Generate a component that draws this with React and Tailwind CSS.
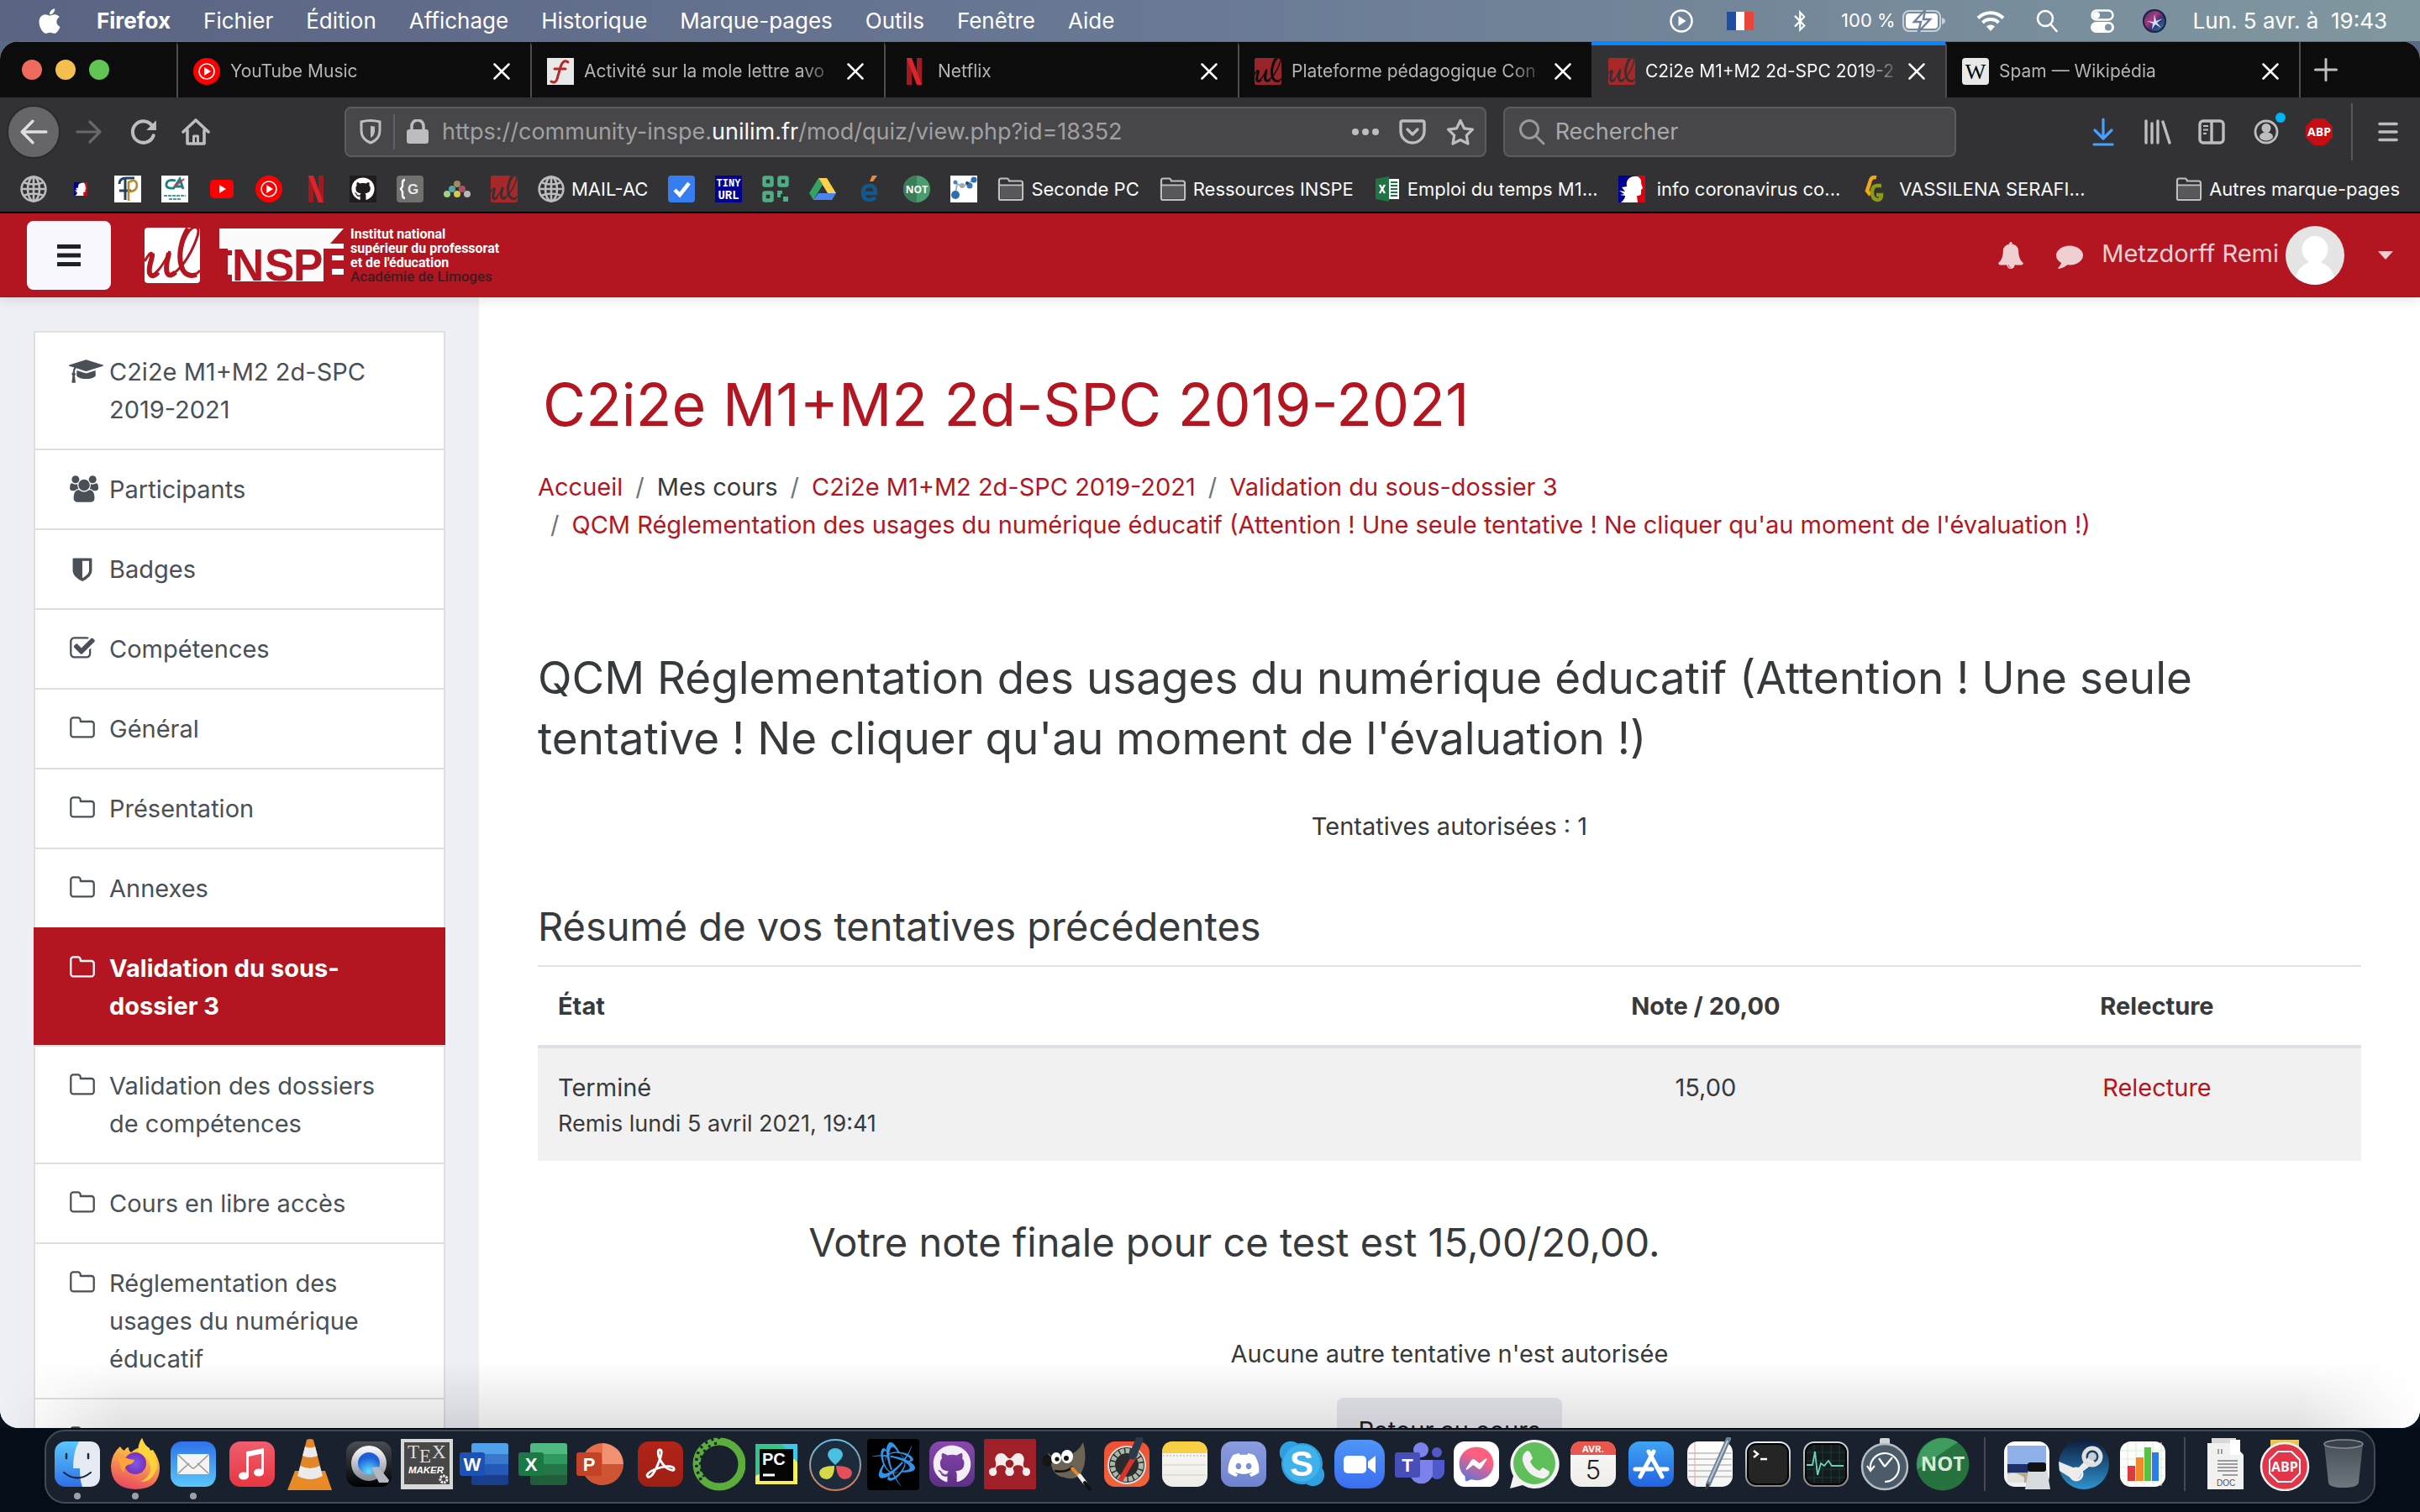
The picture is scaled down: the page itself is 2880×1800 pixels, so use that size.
import React from "react";
import {
  FaApple, FaGithub, FaDiscord, FaWhatsapp, FaFacebookMessenger, FaBattleNet,
  FaBluetoothB, FaMendeley, FaSkype,
} from "react-icons/fa";

const SANS = "font-['Inter','Liberation_Sans',sans-serif]";

/* ---------- shared glyphs ---------- */

function Fa4({ d, w = 1792, width, className = "" }) {
  return (
    <svg viewBox={`0 0 ${w} 1792`} width={width} height={32} fill="currentColor" className={className} aria-hidden="true">
      <path d={d} />
    </svg>
  );
}

const CAP = "M1774 836l18 316q4 69-82 128t-235 93.5-323 34.5-323-34.5-235-93.5-82-128l18-316 574 181q22 7 48 7t48-7zm530-324q0 23-22 31l-1120 352q-4 1-10 1t-10-1l-652-206q-43 34-71 111.5t-34 178.5q63 36 63 109 0 69-58 107l58 433q2 14-8 25-9 11-24 11h-192q-15 0-24-11-10-11-8-25l58-433q-58-38-58-107 0-73 65-111 11-207 98-330l-333-104q-22-8-22-31t22-31l1120-352q4-1 10-1t10 1l1120 352q22 8 22 31z";
const USERS = "M657 896q-162 5-265 128h-134q-82 0-138-40.5t-56-118.5q0-353 124-353 6 0 43.5 21t97.5 42.5 119 21.5q67 0 133-23-5 37-5 66 0 139 81 256zm1071 637q0 120-73 189.5t-194 69.5h-874q-121 0-194-69.5t-73-189.5q0-53 3.5-103.5t14-109 26.5-108.5 43-97.5 62-81 85.5-53.5 111.5-20q10 0 43 21.5t73 48 107 48 135 21.5 135-21.5 107-48 73-48 43-21.5q61 0 111.5 20t85.5 53.5 62 81 43 97.5 26.5 108.5 14 109 3.5 103.5zm-1024-1277q0 106-75 181t-181 75-181-75-75-181 75-181 181-75 181 75 75 181zm704 384q0 159-112.5 271.5t-271.5 112.5-271.5-112.5-112.5-271.5 112.5-271.5 271.5-112.5 271.5 112.5 112.5 271.5zm576 225q0 78-56 118.5t-138 40.5h-134q-103-123-265-128 81-117 81-256 0-29-5-66 66 23 133 23 59 0 119-21.5t97.5-42.5 43.5-21q124 0 124 353zm-128-609q0 106-75 181t-181 75-181-75-75-181 75-181 181-75 181 75 75 181z";
const SHIELD = "M1344 1024v-640h-448v1137q119-63 213-137 235-184 235-360zm192-768v768q0 86-33.5 170.5t-83 150-118 127.5-126.5 103-121 77.5-89.5 49.5-42.5 20q-12 6-26 6t-26-6q-16-7-42.5-20t-89.5-49.5-121-77.5-126.5-103-118-127.5-83-150-33.5-170.5v-768q0-26 19-45t45-19h1152q26 0 45 19t19 45z";
const CHECK = "M1472 930v318q0 119-84.5 203.5t-203.5 84.5h-832q-119 0-203.5-84.5t-84.5-203.5v-832q0-119 84.5-203.5t203.5-84.5h832q63 0 117 25 15 7 18 23 3 17-9 29l-49 49q-10 10-23 10-3 0-9-2-23-6-45-6h-832q-66 0-113 47t-47 113v832q0 66 47 113t113 47h832q66 0 113-47t47-113v-254q0-13 9-22l64-64q10-10 23-10 6 0 12 3 20 8 20 29zm231-489l-814 814q-24 24-57 24t-57-24l-430-430q-24-24-24-57t24-57l110-110q24-24 57-24t57 24l263 263 647-647q24-24 57-24t57 24l110 110q24 24 24 57t-24 57z";
const FOLDER = "M1600 1312v-704q0-40-28-68t-68-28h-704q-40 0-68-28t-28-68v-64q0-40-28-68t-68-28h-320q-40 0-68 28t-28 68v960q0 40 28 68t68 28h1216q40 0 68-28t28-68zm128-704v704q0 92-66 158t-158 66h-1216q-92 0-158-66t-66-158v-960q0-92 66-158t158-66h320q92 0 158 66t66 158v32h672q92 0 158 66t66 158z";
const BELL = "M912 1696q0-16-16-16-59 0-101.5-42.5t-42.5-101.5q0-16-16-16t-16 16q0 73 51.5 124.5t124.5 51.5q16 0 16-16zm816-288q0 52-38 90t-90 38h-448q0 106-75 181t-181 75-181-75-75-181h-448q-52 0-90-38t-38-90q50-42 91-88t85-119.5 74.5-158.5 50-206 19.5-260q0-152 117-282.5t307-158.5q-8-19-8-39 0-40 28-68t68-28 68 28 28 68q0 20-8 39 190 28 307 158.5t117 282.5q0 139 19.5 260t50 206 74.5 158.5 85 119.5 91 88z";
const COMMENT = "M1792 896q0 174-120 321.5t-326 233-450 85.5q-70 0-145-8-198 175-460 242-49 14-114 22-17 2-30.5-9t-17.5-29v-1q-3-4-.5-12t2-10 4.5-9.5l6-9 7-8.5 8-9q7-8 31-34.5t34.5-38 31-39.5 32.5-51 27-59 26-76q-157-89-247.5-220t-90.5-281q0-130 71-248.5t191-204.5 286-136.5 348-50.5 348 50.5 286 136.5 191 204.5 71 248.5z";

/* 32px favicon canvas */
function Fav({ children, size = 32, x, y }) {
  return (
    <svg viewBox="0 0 32 32" x={x} y={y} width={size} height={size} className="shrink-0" aria-hidden="true">
      {children}
    </svg>
  );
}

function UlMark({ size = 32, bg = "#a82729", ink = "#323234" }) {
  return (
    <svg viewBox="0 0 66 66" width={size} height={size} className="shrink-0" aria-hidden="true">
      <rect width="66" height="66" rx="4" fill={bg} />
      <g fill="none" stroke={ink} strokeLinecap="butt" strokeLinejoin="round">
        <path d="M0 40C4 34 7 28 9 31C12 36 4 46 5 54C7 63 20 50 30 28" strokeWidth="3" />
        <path d="M9 31C10 37 4 46 6 54C8 59 12 58 16 53" strokeWidth="6" />
        <path d="M30 28C29 37 25 45 27 53C31 62 46 46 55 29C62 15 67 2 62 0C55 -3 47 12 44 25C41 43 46 57 57 57Q62 56 66 51" strokeWidth="3" />
        <path d="M29 30C28 37 24 46 27 54C29 58 33 57 37 53M52 1C43 15 40 34 44 46C46 54 52 59 62 56" strokeWidth="6" />
      </g>
    </svg>
  );
}

const GlobeIcon = () => (
  <Fav>
    <g fill="none" stroke="#bdbdbf" strokeWidth="2.6">
      <circle cx="16" cy="16" r="14.4" />
      <ellipse cx="16" cy="16" rx="7" ry="14.4" />
      <path d="M16 2v28M2 16h28M5 8.500q11 4 22 0M5 23.500q11-4 22 0" />
    </g>
  </Fav>
);
const YtMusic = () => (
  <Fav>
    <circle cx="16" cy="16" r="16" fill="#f00" />
    <circle cx="16" cy="16" r="9" fill="none" stroke="#fff" strokeWidth="1.6" />
    <path d="M13 11l8 5-8 5z" fill="#fff" />
  </Fav>
);
const Netflix = ({ size = 32 }) => (
  <Fav size={size}>
    <path d="M7 0h6v32H7zM19 0h6v32h-6z" fill="#9e1b1f" />
    <path d="M7 0h6l12 32h-6z" fill="#d9252b" />
  </Fav>
);
const FolderMark = () => (
  <Fav>
    <path d="M2 27V6q0-2.500 2.500-2.500h7q1.500 0 2.500 3h13.500Q30 6.500 30 9v18q0 2-2 2H4q-2 0-2-2z" fill="none" stroke="#c0c0c2" strokeWidth="2.200" />
    <path d="M2 11.500h28" stroke="#c0c0c2" strokeWidth="2" />
    <path d="M3.500 13h25v14.500h-25z" fill="#58585a" />
  </Fav>
);
const Marianne = ({ size = 32, x, y }) => (
  <Fav size={size} x={x} y={y}>
    <path d="M0 0h32v32H0z" fill="#000091" />
    <path d="M22 0h10v32H22z" fill="#e1000f" />
    <path d="M12 4q4-4 11-3 5 3 4 8l2 6-2 2v5q-1 2-5 2l1 8H3q5-4 5-8l-6-1 5-1-6-4 7 1-4-5 6-1q-1-6 2-9z" fill="#fff" />
  </Fav>
);
const FrIco = () => (
  <Fav>
    <path d="M0 0h32v32H0z" fill="#fff" />
    <path d="M6 10q0-7 8-7h10M13 4v25M6 18h14" fill="none" stroke="#24415f" strokeWidth="3" />
    <path d="M17 30V8q9-5 10 3 0 8-9 8" fill="none" stroke="#b98a2e" strokeWidth="2.600" />
  </Fav>
);
const CaIco = () => (
  <Fav>
    <path d="M0 0h32v32H0z" fill="#fff" />
    <path d="M17 6q-10-2-11 4t9 5M14 16l8-12 4 12M16 13h9" fill="none" stroke="#1b7f86" strokeWidth="2.800" />
    <path d="M16 13l11-9" stroke="#d03a3f" strokeWidth="2" />
    <path d="M3 24h26M9 28h15" stroke="#4a9ba0" strokeWidth="2" strokeDasharray="4 1" />
  </Fav>
);
const YoutubeIco = () => (
  <Fav>
    <rect x="2" y="5" width="28" height="22" rx="5" fill="#f00" />
    <path d="M13 11l8 5-8 5z" fill="#fff" />
  </Fav>
);
const GithubIco = () => (
  <Fav>
    <path d="M0 0h32v32H0z" fill="#1f1b1e" />
    <FaGithub x="2" y="2" size={28} color="#fff" />
  </Fav>
);
const GIco = () => (
  <Fav>
    <rect width="32" height="32" rx="4" fill="#70706e" />
    <path d="M10 5q-3 0-3 4v4l-2 3 2 3v4q0 4 3 4" fill="none" stroke="#fff" strokeWidth="2.400" />
    <text x="13" y="22" fontSize="17" fontWeight="700" fontFamily="Liberation Sans" fill="#e8e8e8">G</text>
  </Fav>
);
const DotsIco = () => (
  <Fav>
    <circle cx="16" cy="10" r="4" fill="#9d8c5f" />
    <circle cx="10" cy="16" r="4" fill="#58a3a8" />
    <circle cx="22" cy="16" r="4" fill="#a8545f" />
    <circle cx="4" cy="22" r="4" fill="#9fcf8c" />
    <circle cx="16" cy="22" r="4" fill="#d0cb4e" />
    <circle cx="28" cy="22" r="4" fill="#b8b8ba" />
  </Fav>
);
const CheckIco = () => (
  <Fav>
    <rect width="32" height="32" rx="4" fill="#367df0" />
    <path d="M8 17l6 6L25 9" fill="none" stroke="#fff" strokeWidth="4.500" />
  </Fav>
);
const TinyIco = () => (
  <Fav>
    <path d="M0 0h32v32H0z" fill="#000091" />
    <text x="16" y="13" textAnchor="middle" fontSize="12" fontWeight="700" fontFamily="Liberation Mono" fill="#fff">TINY</text>
    <text x="16" y="28" textAnchor="middle" fontSize="14" fontWeight="700" fontFamily="Liberation Mono" fill="#fff">URL</text>
  </Fav>
);
const QrIco = () => (
  <Fav>
    <g fill="none" stroke="#4fae84" strokeWidth="4.500">
      <rect x="2.500" y="2.500" width="9" height="9" rx="1" />
      <rect x="20.500" y="2.500" width="9" height="9" rx="1" />
      <rect x="2.500" y="20.500" width="9" height="9" rx="1" />
    </g>
    <path d="M18 18h6v4h-2v4h-4zM25 25h6v6h-6z" fill="#4fae84" />
  </Fav>
);
const DriveIco = () => (
  <Fav>
    <path d="M11 3h10l11 18H22z" fill="#fbd24b" />
    <path d="M11 3L0 21l5 8 11-18z" fill="#34a263" />
    <path d="M11 21h21l-5 8H5z" fill="#4b84f0" />
  </Fav>
);
const EIco = () => (
  <Fav>
    <path d="M19 0h6l-5 7h-4z" fill="#f0883a" />
    <path d="M8 21h15q0-9-7-9-8 0-8 9 0 8 8 8 4 0 7-3" fill="none" stroke="#13588a" strokeWidth="4.500" />
  </Fav>
);
const NotIco = () => (
  <Fav>
    <circle cx="16" cy="16" r="16" fill="#4b9c6f" />
    <path d="M16 0a16 16 0 000 32z" fill="#3a7d58" />
    <text x="16" y="20.500" textAnchor="middle" fontSize="12" fontWeight="700" fontFamily="Open Sans" fill="#fff">NOT</text>
  </Fav>
);
const MolIco = () => (
  <Fav>
    <path d="M0 0h32v32H0z" fill="#fff" />
    <path d="M6 22l2-12 7 3 5-3 8-5" fill="none" stroke="#9fb4cc" strokeWidth="2" />
    <circle cx="6" cy="23" r="5" fill="#2f6db3" />
    <circle cx="28" cy="5" r="3.500" fill="#2f6db3" />
    <circle cx="23" cy="12" r="3.500" fill="#3a76ba" />
    <circle cx="14" cy="12" r="3" fill="#9aa" />
    <circle cx="6" cy="8" r="2.500" fill="#4a80c0" />
    <circle cx="20" cy="9" r="2" fill="#246" />
  </Fav>
);
const XlsIco = () => (
  <Fav>
    <path d="M14 4h16v24H14z" fill="#fff" />
    <path d="M20 8h8M20 12h8M20 16h8M20 20h8M20 24h8" stroke="#217346" strokeWidth="2" />
    <path d="M2 4l16-3v30L2 28z" fill="#217346" />
    <path d="M7 11l6 10M13 11L7 21" stroke="#fff" strokeWidth="2.400" />
  </Fav>
);
const VsIco = () => (
  <Fav>
    <path d="M19 2q-7-1-8 7l-3 9 4 5" fill="none" stroke="#f0a818" strokeWidth="4.500" />
    <path d="M25 12h-5q-6 0-6 8t6 9q5 0 5-6h-6" fill="none" stroke="#8a9a12" strokeWidth="4.500" />
  </Fav>
);

/* ---------- macOS menu bar ---------- */

function MenuBar() {
  const menus = ["Fichier", "Édition", "Affichage", "Historique", "Marque-pages", "Outils", "Fenêtre", "Aide"];
  return (
    <header className="flex h-[49px] shrink-0 items-center justify-between bg-linear-to-r from-[#5a6482] via-[#6a7a95] to-[#80979f] pr-[39px] pl-[42px] text-[26px] text-white">
      <nav className="flex items-center gap-[39px] [text-shadow:0_2px_4px_rgba(0,0,0,0.3)]">
        <button aria-label="Menu Pomme" className="flex w-[34px] justify-center"><FaApple size={34} /></button>
        <button className="font-bold">Firefox</button>
        {menus.map((m) => <button key={m}>{m}</button>)}
      </nav>
      <div className="flex items-center">
        <svg viewBox="0 0 28 28" width="28" height="28" className="mr-10"><circle cx="14" cy="14" r="12.500" fill="none" stroke="#fff" strokeWidth="2.500" /><path d="M10.500 8l9 6-9 6z" fill="#fff" /></svg>
        <svg viewBox="0 0 32 22" width="32" height="22" className="mr-[42px]"><path d="M0 0h11v22H0z" fill="#1f4fa3" /><path d="M11 0h10v22H11z" fill="#fff" /><path d="M21 0h11v22H21z" fill="#e8463c" /></svg>
        <FaBluetoothB size={26} className="mr-9" />
        <span className="mr-2 text-[22px]">100 %</span>
        <svg viewBox="0 0 52 26" width="52" height="26" className="mr-9">
          <rect x="1" y="1" width="44" height="24" rx="7" fill="none" stroke="#fff" strokeOpacity="0.6" strokeWidth="2" />
          <rect x="4" y="4" width="38" height="18" rx="4" fill="#fff" />
          <path d="M47 9q4 1 4 4t-4 4z" fill="#fff" fillOpacity="0.6" />
          <path d="M27 0L14 14h8l-3 12 14-15h-8z" fill="#fff" stroke="#6f8299" strokeWidth="2.500" />
        </svg>
        <svg viewBox="0 0 34 26" width="34" height="26" className="mr-9" fill="none" stroke="#fff" strokeWidth="4">
          <path d="M2 9.500a21 21 0 0130 0M7.500 15a13.500 13.500 0 0119 0" />
          <path d="M17 25l-5-5.500a7 7 0 0110 0z" fill="#fff" stroke="none" />
        </svg>
        <svg viewBox="0 0 28 28" width="28" height="28" className="mr-[38px]" fill="none" stroke="#fff" strokeWidth="2.600" strokeLinecap="round"><circle cx="12" cy="11" r="9" /><path d="M18.500 18l7 8" /></svg>
        <svg viewBox="0 0 28 28" width="28" height="28" className="mr-[34px]">
          <rect x="1.500" y="1.500" width="25" height="11" rx="5.500" fill="none" stroke="#fff" strokeWidth="2.400" />
          <circle cx="7" cy="7" r="4" fill="#fff" />
          <rect y="15" width="28" height="13" rx="6.500" fill="#fff" /><circle cx="21" cy="21.500" r="4" fill="#7d93a3" />
        </svg>
        <svg viewBox="0 0 28 28" width="28" height="28" className="mr-8">
          <defs><linearGradient id="siri" x1="0" y1="0" x2="1" y2="1"><stop offset="0" stopColor="#27356e" /><stop offset=".4" stopColor="#a83a78" /><stop offset=".6" stopColor="#2f3276" /><stop offset="1" stopColor="#2fa3a9" /></linearGradient></defs>
          <circle cx="14" cy="14" r="14" fill="url(#siri)" />
          <circle cx="14" cy="14" r="13" fill="none" stroke="#1c2248" strokeWidth="2" />
          <path d="M5 14l8 1 1-9 2 8 8-3-7 5 5 6-7-4-4 6 1-7z" fill="#e6efff" fillOpacity=".9" />
        </svg>
        <time className="whitespace-pre">Lun. 5 avr. à  19:43</time>
      </div>
    </header>
  );
}

/* ---------- browser chrome ---------- */

const TABS = [
  { title: "YouTube Music", icon: <YtMusic /> },
  {
    title: "Activité sur la mole lettre avo",
    icon: (<Fav><path d="M0 0h32v32H0z" fill="#e8e8e8" /><path d="M25 5q-6-4-9 6l-4 14q-2 6-7 3M9 13h13" fill="none" stroke="#b02a26" strokeWidth="3" strokeLinecap="round" /></Fav>),
  },
  { title: "Netflix", icon: <Netflix /> },
  { title: "Plateforme pédagogique Con", icon: <UlMark ink="#0c0c0d" bg="#96242a" /> },
  { title: "C2i2e M1+M2 2d-SPC 2019-2", icon: <UlMark />, active: true },
  {
    title: "Spam — Wikipédia",
    icon: (<Fav><rect width="32" height="32" rx="4" fill="#e8e8e8" /><text x="16" y="25" textAnchor="middle" fontSize="26" fontFamily="Liberation Serif" fill="#000">W</text></Fav>),
  },
];

function Tab({ title, icon, active }) {
  return (
    <div role="tab" aria-selected={!!active} className={active
      ? "flex h-full w-[421px] items-center border-t-4 border-[#0a84ff] bg-[#323234] pb-px pr-6 pl-5 text-[#f9f9fa]"
      : "flex h-full w-[421px] items-center border-t-4 border-l-2 border-l-[#4d4d4f] border-t-transparent pb-px pr-6 pl-[18px] text-[#b4b4b5]"}>
      {icon}
      <span className="ml-3 h-8 min-w-0 flex-1 overflow-hidden text-[21px] leading-8 whitespace-nowrap [mask-image:linear-gradient(to_right,black_85%,transparent)]">{title}</span>
      <button aria-label={`Fermer ${title}`} className="ml-2 text-white">
        <svg viewBox="0 0 20 20" width="20" height="20" stroke="currentColor" strokeWidth="2.500" strokeLinecap="round"><path d="M1.500 1.500l17 17M18.500 1.500l-17 17" /></svg>
      </button>
    </div>
  );
}

function TabBar() {
  return (
    <div className="flex h-[67px] shrink-0 border-t border-[#6e6e70] bg-[#0c0c0d]">
      <div className="flex w-[210px] shrink-0 items-center gap-4 pl-[26px]">
        <button aria-label="Fermer" className="size-6 rounded-full bg-[#ed6a5e]" />
        <button aria-label="Réduire" className="size-6 rounded-full bg-[#f5bf4f]" />
        <button aria-label="Agrandir" className="size-6 rounded-full bg-[#61c554]" />
      </div>
      <div role="tablist" className="flex">{TABS.map((t) => <Tab key={t.title} {...t} />)}</div>
      <button aria-label="Nouvel onglet" className="flex items-center border-l-2 border-[#4d4d4f] pl-4 text-[#bfbfc0]">
        <svg viewBox="0 0 28 28" width="28" height="28" stroke="currentColor" strokeWidth="3" strokeLinecap="round"><path d="M14 1.500v25M1.500 14h25" /></svg>
      </button>
    </div>
  );
}

function Toolbar() {
  const grey = "#bdbdbf";
  return (
    <div className="flex h-20 shrink-0 items-center bg-[#323234] pt-0.5 pr-[26px] pl-2">
      <button aria-label="Page précédente" className="flex size-16 items-center justify-center rounded-full border-2 border-[#2a2a2c] bg-[#666668]">
        <svg viewBox="0 0 32 32" width="34" height="34" fill="none" stroke="#e0e0e1" strokeWidth="3.200" strokeLinecap="round" strokeLinejoin="round"><path d="M30 16H3M15 4L3 16l12 12" /></svg>
      </button>
      <button aria-label="Page suivante" className="ml-[18px]">
        <svg viewBox="0 0 32 32" width="32" height="32" fill="none" stroke="#68686a" strokeWidth="3.200" strokeLinecap="round" strokeLinejoin="round"><path d="M2 16h27M17 4l12 12-12 12" /></svg>
      </button>
      <button aria-label="Actualiser" className="ml-8">
        <svg viewBox="0 0 32 32" width="34" height="34" fill="none" stroke={grey} strokeWidth="3.800"><path d="M27 20a12 12 0 11-1-10" strokeLinecap="round" /><path d="M30 3v11H19z" fill={grey} stroke="none" /></svg>
      </button>
      <button aria-label="Accueil" className="ml-7">
        <svg viewBox="0 0 34 34" width="34" height="34" fill="none" stroke={grey} strokeWidth="3.600" strokeLinejoin="round" strokeLinecap="round"><path d="M2 17L17 3l15 14M7 15v16h20V15" /><path d="M14.500 31v-9h5v9" strokeWidth="3" /></svg>
      </button>

      <div className="mr-5 ml-40 flex h-[60px] flex-[1364] items-center rounded-lg border-2 border-[#5c5c5e] bg-[#474749] pr-3 pl-4">
        <svg viewBox="0 0 26 30" width="26" height="30" fill="none" stroke={grey} strokeWidth="3"><path d="M2 3q11-3 22 0v10q0 11-11 15Q2 24 2 13z" /><path d="M13 8q3 0 5 .7V14q0 5-5 8z" fill={grey} stroke="none" /></svg>
        <span className="mx-3.5 h-[42px] w-[2px] bg-[#5c6070]" />
        <svg viewBox="0 0 26 30" width="26" height="30"><rect y="12" width="26" height="17" rx="3" fill={grey} /><path d="M6 13V8a7 7 0 0114 0v5" fill="none" stroke={grey} strokeWidth="3.500" /></svg>
        <div className="relative ml-4 h-full flex-1">
          <input aria-label="Adresse" readOnly value="https://community-inspe.unilim.fr/mod/quiz/view.php?id=18352" className="h-full w-full bg-transparent text-[27px] text-transparent outline-none" />
          <div aria-hidden="true" className="pointer-events-none absolute inset-0 flex items-center text-[27px] text-[#a0a0a1]">
            https://community-inspe.<span className="text-[#f9f9fa]">unilim.fr</span>/mod/quiz/view.php?id=18352
          </div>
        </div>
        <div className="flex items-center gap-6">
          <button aria-label="Actions"><svg viewBox="0 0 32 8" width="32" height="8" fill={grey}><circle cx="4" cy="4" r="4" /><circle cx="16" cy="4" r="4" /><circle cx="28" cy="4" r="4" /></svg></button>
          <button aria-label="Pocket"><svg viewBox="0 0 32 30" width="32" height="30" fill="none" stroke={grey} strokeWidth="3.400" strokeLinecap="round" strokeLinejoin="round"><path d="M2 4q0-2 2-2h24q2 0 2 2v10a14 14 0 01-28 0z" /><path d="M10 12l6 6 6-6" /></svg></button>
          <button aria-label="Marquer cette page"><svg viewBox="0 0 34 32" width="34" height="32" fill="none" stroke={grey} strokeWidth="3.200" strokeLinejoin="round"><path d="M17 2.500l4.500 9.300 10 1.400-7.200 7 1.700 10L17 25.500l-9 4.700 1.700-10-7.200-7 10-1.400z" /></svg></button>
        </div>
      </div>
      <label className="flex h-[60px] flex-[534] items-center rounded-lg border-2 border-[#5c5c5e] bg-[#474749] pl-4">
        <svg viewBox="0 0 32 32" width="32" height="32" fill="none" stroke="#98989a" strokeWidth="3" strokeLinecap="round"><circle cx="13" cy="13" r="10.500" /><path d="M21 21l9 9" /></svg>
        <input aria-label="Rechercher" placeholder="Rechercher" className="ml-3 min-w-0 flex-1 bg-transparent text-[27px] outline-none placeholder:text-[#a9a9aa]" />
      </label>

      <div className="ml-[162px] flex items-center">
        <button aria-label="Téléchargements" className="mr-9"><svg viewBox="0 0 26 34" width="26" height="34" fill="none" stroke="#45a1ff" strokeWidth="3.200" strokeLinecap="round" strokeLinejoin="round"><path d="M13 2v23M3 15l10 10 10-10M2 32h22" /></svg></button>
        <button aria-label="Bibliothèque" className="mr-8"><svg viewBox="0 0 32 30" width="32" height="30" stroke={grey} strokeWidth="3.400" strokeLinecap="round"><path d="M2 2v26M9 5v23M16 2v26M22 3l8 25" /></svg></button>
        <button aria-label="Panneaux latéraux" className="mr-[34px]"><svg viewBox="0 0 32 30" width="32" height="30" fill="none" stroke={grey} strokeWidth="3.400"><rect x="2" y="2" width="28" height="26" rx="4" /><path d="M16 2v26" /><path d="M6 8h6M6 12.500h6M6 17h4" strokeWidth="2" /></svg></button>
        <button aria-label="Compte" className="relative mr-8">
          <svg viewBox="0 0 30 30" width="30" height="30"><circle cx="15" cy="15" r="13" fill="none" stroke={grey} strokeWidth="2.800" /><circle cx="15" cy="10.500" r="5.500" fill={grey} /><ellipse cx="15" cy="20.500" rx="8" ry="5" fill={grey} /></svg>
          <span className="absolute -top-2 -right-2 size-3 rounded-full bg-[#00b3f4]" />
        </button>
        <button aria-label="Adblock Plus" className="mr-[22px]"><svg viewBox="0 0 32 32" width="32" height="32"><path d="M9.500 0h13L32 9.500v13L22.500 32h-13L0 22.500v-13z" fill="#c70d12" /><text x="16" y="21" textAnchor="middle" fontSize="14" fontWeight="700" fontFamily="Open Sans" fill="#fff">ABP</text></svg></button>
        <span className="mr-[30px] h-[68px] w-[2px] bg-[#58585a]" />
        <button aria-label="Menu"><svg viewBox="0 0 24 24" width="24" height="24" stroke={grey} strokeWidth="3.600" strokeLinecap="round"><path d="M2 2.500h20M2 12h20M2 21.500h20" /></svg></button>
      </div>
    </div>
  );
}

function Bookmark({ icon, label, name, wide }) {
  return (
    <a href="#" aria-label={label || name} className={wide ? "flex shrink-0 items-center gap-3.5 whitespace-nowrap" : "flex shrink-0 items-center gap-2 whitespace-nowrap"}>
      {icon}
      {label && <span>{label}</span>}
    </a>
  );
}

const BOOKMARKS = [
  ["Site", <GlobeIcon />], ["Marianne", <Fav><Marianne size={16} x={8} y={8} /></Fav>],
  ["TP", <FrIco />], ["Crédit Agricole", <CaIco />], ["YouTube", <YoutubeIco />], ["YouTube Music", <YtMusic />],
  ["Netflix", <Netflix />], ["GitHub", <GithubIco />], ["G", <GIco />], ["Couleurs", <DotsIco />], ["Unilim", <UlMark />],
];
const BOOKMARKS_2 = [
  ["Tâches", <CheckIco />], ["TinyURL", <TinyIco />], ["QR", <QrIco />], ["Drive", <DriveIco />],
  ["Éduscol", <EIco />], ["NOT", <NotIco />], ["Molécules", <MolIco />],
];

function BookmarkBar() {
  return (
    <nav className="flex h-[58px] shrink-0 items-center gap-6 border-b-2 border-black bg-[#323234] pt-0.5 pr-6 pl-6 text-[22px] text-[#f9f9fa]">
      {BOOKMARKS.map(([n, i]) => <Bookmark key={n} name={n} icon={i} />)}
      <Bookmark icon={<GlobeIcon />} label="MAIL-AC" />
      {BOOKMARKS_2.map(([n, i]) => <Bookmark key={n} name={n} icon={i} />)}
      <Bookmark icon={<FolderMark />} label="Seconde PC" />
      <Bookmark icon={<FolderMark />} label="Ressources INSPE" />
      <Bookmark icon={<XlsIco />} label="Emploi du temps M1..." />
      <Bookmark icon={<Marianne />} label="info coronavirus co..." wide />
      <Bookmark icon={<VsIco />} label="VASSILENA SERAFI..." wide />
      <div className="ml-auto"><Bookmark icon={<FolderMark />} label="Autres marque-pages" /></div>
    </nav>
  );
}

/* ---------- Moodle page ---------- */

function InspeLogo() {
  return (
    <svg viewBox="0 0 150 68" width="150" height="68" role="img" aria-label="INSPE">
      <path d="M0 2h148l-16 18v6H0z" fill="#fbfbfb" />
      <path d="M10 25h114v40H15v-8h-5V34h5v-6h-5z" fill="#fbfbfb" />
      <path d="M104 52h20v13h-20z" fill="#fbfbfb" />
      <path d="M124 26h10v40h-10z" fill="#b41621" />
      <path d="M131 20h17v6h-17zM134 34h14v6h-14zM134 50h14v7h-14z" fill="#fbfbfb" />
      <g fontSize="53" fontWeight="700" fontFamily="Liberation Sans" fill="#b41621">
        <text x="15" y="64">N</text>
        <text x="54" y="64">S</text>
        <text x="88" y="64">P</text>
      </g>
    </svg>
  );
}

function SiteHeader() {
  return (
    <header className="relative z-10 flex h-[100px] shrink-0 items-center justify-between bg-[#b41621] pr-8 pl-8 shadow-[0_4px_12px_rgba(0,0,0,0.1)]">
      <div className="flex items-center">
        <button aria-label="Menu latéral" className="flex h-[82px] w-[100px] items-center justify-center rounded-lg bg-[#f8f7fd]">
          <svg viewBox="0 0 28 26" width="28" height="26" stroke="#1d2125" strokeWidth="5"><path d="M0 2.500h28M0 13h28M0 23.500h28" /></svg>
        </button>
        <a href="#" className="ml-10 flex items-center">
          <UlMark size={66} bg="#fff" ink="#b41621" />
          <span className="ml-[23px]"><InspeLogo /></span>
          <span className="ml-[6px] flex flex-col font-['Roboto','Liberation_Sans',sans-serif] text-[16px] leading-[17px] font-bold text-white">
            <span>Institut national</span>
            <span>supérieur du professorat</span>
            <span>et de l'éducation</span>
            <span className="text-[17px] font-medium text-[#3d1c20]">Académie de Limoges</span>
          </span>
        </a>
      </div>
      <div className="flex items-center text-[#f0cfd3]">
        <button aria-label="Notifications" className="mr-[38px]"><Fa4 d={BELL} width={32} /></button>
        <button aria-label="Messages" className="mr-[22px]"><Fa4 d={COMMENT} width={32} /></button>
        <button className="flex items-center text-[29px]">
          <span className="pb-1">Metzdorff Remi</span>
          <svg viewBox="0 0 70 70" width="70" height="70" className="mr-10 ml-2 rounded-full">
            <path d="M0 0h70v70H0z" fill="#e5e5e5" />
            <ellipse cx="35" cy="28" rx="15.500" ry="16" fill="#fff" />
            <path d="M27 38h16v6q14 4 17 26H10q3-22 17-26z" fill="#fff" />
          </svg>
          <svg viewBox="0 0 18 10" width="18" height="10" fill="currentColor"><path d="M0 0h18L9 10z" /></svg>
        </button>
      </div>
    </header>
  );
}

const NAV = [
  ["C2i2e M1+M2 2d-SPC 2019-2021", "cap"],
  ["Participants", "users"],
  ["Badges", "shield"],
  ["Compétences", "check"],
  ["Général"], ["Présentation"], ["Annexes"],
  ["Validation du sous-dossier 3", "folder", true],
  ["Validation des dossiers de compétences"],
  ["Cours en libre accès"],
  ["Réglementation des usages du numérique éducatif"],
];

function NavIcon({ kind }) {
  if (kind === "cap") return <Fa4 d={CAP} w={2304} width={41} />;
  if (kind === "users") return <Fa4 d={USERS} w={1984} width={35} />;
  if (kind === "shield") return <Fa4 d={SHIELD} width={32} />;
  if (kind === "check") return <Fa4 d={CHECK} width={32} />;
  return <Fa4 d={FOLDER} width={32} />;
}

function Drawer() {
  return (
    <aside className="w-[570px] shrink-0 bg-[#eff0f6] px-10 pt-10">
      <ul className="border-2 border-b-0 border-[#dfdfdf] bg-white text-[29px] leading-[45px] text-[#495057]">
        {NAV.map(([label, kind, active]) => (
          <li key={label} className={active ? "-mx-0.5 -mt-0.5 border-b-2 border-[#dfdfdf] bg-[#b41621] px-0.5 pt-0.5 font-bold text-white" : "border-b-2 border-[#dfdfdf]"}>
            <a href="#" className="flex py-6 pr-10 pl-10">
              <span className="w-12 shrink-0 pt-1.5"><NavIcon kind={kind} /></span>
              <span className="min-w-0">{label}</span>
            </a>
          </li>
        ))}
        <li className="flex h-24 py-6 pl-10">
          <a href="#" aria-label="Section suivante" className="pt-1.5"><NavIcon /></a>
        </li>
      </ul>
    </aside>
  );
}

function Sep() {
  return <span className="mx-[15px] text-[#6c757d]">/</span>;
}

function Main() {
  return (
    <main className="min-w-0 flex-1 bg-white px-[70px] pt-[83px] text-[29px] leading-[45px] text-[#373a3c]">
      <h1 className="pl-1.5 text-[70px] leading-[90px] text-[#b41621]">C2i2e M1+M2 2d-SPC 2019-2021</h1>
      <nav className="mt-[30px] text-[#b41621]">
        <a href="#">Accueil</a><Sep /><span className="text-[#373a3c]">Mes cours</span><Sep />
        <a href="#">C2i2e M1+M2 2d-SPC 2019-2021</a><Sep /><a href="#">Validation du sous-dossier 3</a>
        <br />
        <Sep /><a href="#">QCM Réglementation des usages du numérique éducatif (Attention ! Une seule tentative ! Ne cliquer qu'au moment de l'évaluation !)</a>
      </nav>
      <h2 className="mt-[124px] text-[53px] leading-[72px]">QCM Réglementation des usages du numérique éducatif (Attention ! Une seule tentative ! Ne cliquer qu'au moment de l'évaluation !)</h2>
      <p className="mt-[46px] text-center">Tentatives autorisées : 1</p>
      <h3 className="mt-[66px] text-[47px] leading-[62px]">Résumé de vos tentatives précédentes</h3>
      <table className="mt-[15px] w-full table-fixed">
        <thead>
          <tr className="border-t-2 border-b-4 border-[#dee2e6]">
            <th className="w-[50.5%] px-6 py-6 text-left font-bold">État</th>
            <th className="w-[27.1%] px-6 py-6 text-center font-bold">Note / 20,00</th>
            <th className="px-6 py-6 text-center font-bold">Relecture</th>
          </tr>
        </thead>
        <tbody>
          <tr className="bg-[#f1f1f1] align-top">
            <td className="px-6 py-6">Terminé<br /><span className="block text-[27px] leading-[41px]">Remis lundi 5 avril 2021, 19:41</span></td>
            <td className="px-6 py-6 text-center">15,00</td>
            <td className="px-6 py-6 text-center"><a href="#" className="text-[#b41621]">Relecture</a></td>
          </tr>
        </tbody>
      </table>
      <h3 className="mt-[66px] w-[76.4%] text-center text-[47px] leading-[62px]">Votre note finale pour ce test est 15,00/20,00.</h3>
      <p className="mt-[79px] text-center">Aucune autre tentative n'est autorisée</p>
      <div className="mt-[30px] text-center">
        <button className="rounded-lg bg-[#e9e9f0] px-[26px] py-4 text-[29px] leading-[45px] text-[#1d2125]">Retour au cours</button>
      </div>
    </main>
  );
}

/* ---------- Dock ---------- */

function Grad({ id, from, to, x2 = 0, y2 = 1 }) {
  return (
    <linearGradient id={id} x1="0" y1="0" x2={x2} y2={y2}>
      <stop offset="0" stopColor={from} /><stop offset="1" stopColor={to} />
    </linearGradient>
  );
}

function Tile({ id, from, to, children }) {
  return (
    <>
      <defs><Grad id={id} from={from} to={to} /></defs>
      <rect x="5" y="5" width="54" height="54" rx="13" fill={`url(#${id})`} />
      {children}
    </>
  );
}

function Office({ letter, dark, c, round }) {
  return (
    <>
      <clipPath id={`of${letter}`}>{round ? <circle cx="33" cy="32" r="25" /> : <rect x="16" y="7" width="44" height="50" rx="3" />}</clipPath>
      <g clipPath={`url(#of${letter})`}>
        {round ? (
          <><path d="M8 7h25v50H8z" fill={c[1]} /><path d="M33 7h26v25H33z" fill={c[0]} /><path d="M8 32h51v26H8z" fill={c[2]} /></>
        ) : (
          <><path d="M16 7h44v13H16z" fill={c[0]} /><path d="M16 20h44v12H16z" fill={c[1]} /><path d="M16 32h44v13H16z" fill={c[2]} /><path d="M16 45h44v12H16z" fill={c[3]} /></>
        )}
      </g>
      <rect x="2" y="18" width="30" height="28" rx="3" fill={dark} />
      <text x="17" y="40" textAnchor="middle" fontSize="22" fontWeight="700" fontFamily="Liberation Sans" fill="#fff">{letter}</text>
    </>
  );
}

const DOCK_MAIN = [
  ["Finder", <Tile id="fi" from="#5ac8fa" to="#2f6fe8">
    <path d="M34 5h12q13 0 13 13v28q0 13-13 13h-8q-3-8-3-22h-8q0-20 7-32z" fill="#e6eaf2" />
    <path d="M19 20v5M45 20v5" stroke="#1b2b45" strokeWidth="2.500" strokeLinecap="round" />
    <path d="M16 42q16 13 32 0" fill="none" stroke="#1b2b45" strokeWidth="2.200" strokeLinecap="round" />
  </Tile>],
  ["Firefox", <>
    <defs><Grad id="ff" from="#ffcf3f" to="#e4286b" x2={-0.3} /><radialGradient id="ffc"><stop offset="0" stopColor="#7a5cf0" /><stop offset="1" stopColor="#7b2fb5" /></radialGradient></defs>
    <path d="M14 11q2 4 5 5 2-4 5-4 0 4 3 6 6-5 9-5Q37 5 40 1q3 9 9 12v3l4-1q8 12 8 21 0 26-29 26Q3 61 3 34q1-15 11-23z" fill="url(#ff)" />
    <path d="M40 1q3 9 9 13 9 9 9 22-6 18-20 17 16-8 11-22-3-9-13-12-2-10 4-18z" fill="#ffd83a" fillOpacity=".85" />
    <circle cx="32" cy="31" r="13" fill="url(#ffc)" />
    <path d="M11 26q9-3 14 0l6 1q-1 5-8 6-5 3-4 9-5-4-5-11z" fill="#ffa436" />
  </>],
  ["Mail", <Tile id="ma" from="#2f72ea" to="#5ac8fa">
    <rect x="13" y="20" width="38" height="24" rx="2" fill="#f4f4f4" />
    <path d="M14 43l13-12M50 43L37 31M14 21l16 15q2 2 4 0l16-15" fill="none" stroke="#9a9a9a" strokeWidth="1.600" />
  </Tile>],
  ["Musique", <Tile id="mu" from="#ee5e6e" to="#e83641">
    <path d="M26 17l20-4v6l-18 4v23h-3V17zM43 14h3v27h-3z" fill="#fff" />
    <ellipse cx="22" cy="46" rx="6" ry="4.500" fill="#fff" /><ellipse cx="40" cy="42" rx="6" ry="4.500" fill="#fff" />
  </Tile>],
  ["VLC", <>
    <path d="M14 40h36l8 23H5z" fill="#e88a25" />
    <path d="M28 3q4-2 8 0l11 43q-15 8-30 0z" fill="#e4862a" />
    <path d="M26 11q6 3 12 0l3 11q-9 4-18 0zM20.500 34q11 6 23 0l3.500 12q-15 8-30 0z" fill="#ebebee" />
  </>],
  ["QuickTime", <Tile id="qt" from="#4b4d52" to="#000">
    <defs><Grad id="qtr" from="#f2f4f7" to="#8b9099" /><radialGradient id="qtb" cy=".8"><stop offset="0" stopColor="#65e0ff" /><stop offset="1" stopColor="#1c60d8" /></radialGradient></defs>
    <circle cx="32" cy="31" r="17" fill="url(#qtb)" stroke="url(#qtr)" strokeWidth="8" />
    <path d="M35 36l8-1 13 16-1 3H44z" fill="#b4b8c0" />
  </Tile>],
  ["TeXmaker", <>
    <path d="M1 2h62v60H1z" fill="#d8d8d8" /><path d="M5 6h54v50H5z" fill="#484848" />
    <g fill="#ddd" fontFamily="Liberation Serif" fontSize="23"><text x="9" y="25">T</text><text x="23" y="30">E</text><text x="38" y="25">X</text></g>
    <text x="31" y="43" textAnchor="middle" fontSize="11.500" fontWeight="700" fontStyle="italic" fontFamily="Liberation Sans" fill="#fff">MAKER</text>
    <circle cx="52" cy="50" r="4" fill="none" stroke="#eee" strokeWidth="3" strokeDasharray="2.500 1" />
  </>],
  ["Word", <Office letter="W" dark="#1b52b5" c={["#50a0ea", "#3a78d0", "#2558b8", "#193f8c"]} />],
  ["Excel", <Office letter="X" dark="#1a7a45" c={["#50b883", "#2f9960", "#247548", "#215c3b"]} />],
  ["PowerPoint", <Office letter="P" dark="#c24325" c={["#f29072", "#e86b4a", "#cf5433"]} round />],
  ["Acrobat", <Tile id="ac" from="#b32418" to="#9e1f14">
    <path d="M16 45q2-5 16-9 14-3 16 1 1 4-6 1-8-4-12-15-2-8 1-8 4 0 1 9-5 15-10 21-5 5-6 0z" fill="none" stroke="#fff" strokeWidth="2.800" strokeLinejoin="round" />
  </Tile>],
  ["Anaconda", <>
    <circle cx="33" cy="32" r="27" fill="none" stroke="#5cae3c" strokeWidth="9" />
    <path d="M34 0q-20 4-26 18-6 16 4 34" fill="none" stroke="#1a212e" strokeWidth="3.500" strokeDasharray="3 5" />
    <path d="M30 7q-15 4-19 18-2 12 4 22" fill="none" stroke="#1a212e" strokeWidth="3" strokeDasharray="3 5" />
  </>],
  ["PyCharm", <>
    <path d="M7 8h50v48H7z" fill="#f3ee5a" /><path d="M7 8h50v16L7 46z" fill="#34c58f" /><path d="M38 8h19v22z" fill="#3fc6e8" /><path d="M12 14h40v38H12z" fill="#050505" />
    <text x="15" y="33" fontSize="20" fontWeight="700" fontFamily="Liberation Sans" fill="#fff">PC</text><path d="M16 45h14" stroke="#fff" strokeWidth="3" />
  </>],
  ["DaVinci Resolve", <>
    <defs><Grad id="dv" from="#5fc3e8" to="#d8794c" /></defs>
    <circle cx="32" cy="33" r="30" fill="#1c2c3c" stroke="url(#dv)" strokeWidth="2" />
    <path d="M32 33q-9-8-9-12a9 8 0 0118 0q0 4-9 12z" fill="#4cc0e0" />
    <path d="M31 34q0 15-9 16-9-1-9-8 1-8 18-8z" fill="#d5da48" />
    <path d="M33 34q18 0 19 8 0 7-9 8-9-1-10-16z" fill="#e2505a" />
  </>],
  ["Battle.net", <><rect x="1" y="2" width="62" height="61" rx="4" fill="#000" /><FaBattleNet x="6" y="6" size={52} color="#2f93e8" /></>],
  ["GitHub Desktop", <Tile id="gh" from="#8a48b0" to="#5c2f85"><FaGithub x="9" y="9" size={46} color="#f2f0f5" /></Tile>],
  ["Mendeley", <><rect x="1" y="2" width="62" height="60" rx="2" fill="#9f2029" /><FaMendeley x="7" y="8" size={49} color="#f3eded" /></>],
  ["GIMP", <>
    <path d="M8 18q6 8 16 5Q42 22 50 6q6 20-2 36-6 10-20 6-14-2-16-16z" fill="#6b6353" />
    <ellipse cx="7" cy="28" rx="6" ry="7" fill="#151515" /><ellipse cx="18" cy="25" rx="6" ry="7" fill="#fff" /><ellipse cx="31" cy="23" rx="7" ry="8" fill="#fff" />
    <circle cx="19" cy="26" r="2.600" fill="#111" /><circle cx="30" cy="25" r="3" fill="#111" />
    <path d="M16 40q14 3 22-5" fill="none" stroke="#111" strokeWidth="2.500" />
    <path d="M36 36l12 13" stroke="#e58a35" strokeWidth="4" /><path d="M46 46l6 8" stroke="#eee" strokeWidth="5" strokeLinecap="round" /><path d="M52 54l6 8" stroke="#111" strokeWidth="4" strokeLinecap="round" />
  </>],
  ["Numériseur de couleurs", <Tile id="dc" from="#ee5133" to="#f0633a">
    <circle cx="32" cy="33" r="22" fill="#2b2b2b" stroke="#ddd" strokeWidth="2" />
    <circle cx="32" cy="33" r="17" fill="none" stroke="#a9b7a9" strokeWidth="6" strokeDasharray="5 1.500" />
    <path d="M24 52l19-33" stroke="#d8322c" strokeWidth="6" /><path d="M39 22l8-19" stroke="#2b3a4a" strokeWidth="9" strokeLinecap="round" />
  </Tile>],
  ["Notes", <Tile id="no" from="#fbfaf7" to="#eeece6">
    <path d="M5 19q0-14 13-14h28q13 0 13 14z" fill="#f8cf42" /><path d="M6 22h52" stroke="#aaa" strokeDasharray="2 2" /><path d="M6 33h52M6 45h52" stroke="#d0cfcc" />
  </Tile>],
  ["Discord", <Tile id="di" from="#8b9de0" to="#6f83cf"><FaDiscord x="12" y="13" size={40} color="#fff" /></Tile>],
  ["Skype", <><FaSkype x="2" y="1" size={61} color="#2f9fe0" /><circle cx="32" cy="31" r="22" fill="#3fb2ec" /><text x="32" y="46" textAnchor="middle" fontSize="42" fontWeight="700" fontFamily="Liberation Sans" fill="#fff">S</text></>],
  ["Zoom", <>
    <defs><Grad id="zo" from="#4f95f7" to="#3a6ff0" /></defs>
    <rect x="2" y="3" width="60" height="58" rx="19" fill="url(#zo)" /><rect x="13" y="22" width="27" height="21" rx="5" fill="#fff" /><path d="M42 29l9-7v21l-9-7z" fill="#fff" />
  </>],
  ["Teams", <>
    <circle cx="35" cy="15" r="9" fill="#7b83eb" /><circle cx="54" cy="18" r="6" fill="#5059c9" />
    <path d="M46 27h17v14a9 9 0 01-17 4z" fill="#5059c9" /><path d="M22 27h27v18a14 14 0 01-27 0z" fill="#7b83eb" />
    <rect x="4" y="18" width="30" height="30" rx="3" fill="#464eb8" /><text x="19" y="41" textAnchor="middle" fontSize="22" fontWeight="700" fontFamily="Liberation Sans" fill="#fff">T</text>
  </>],
  ["Messenger", <Tile id="me" from="#fff" to="#fff">
    <defs><Grad id="ms" from="#ff5f7e" to="#1d7bff" x2={-0.5} /></defs>
    <FaFacebookMessenger x="11" y="11" size={42} color="#8a4dff" fill="url(#ms)" />
  </Tile>],
  ["WhatsApp", <>
    <path d="M32 3a29 29 0 11-14 54L3 61l4-15A29 29 0 0132 3z" fill="#f2f2f2" />
    <circle cx="32" cy="31" r="25" fill="#5fbf5a" />
    <path d="M22 17q3-2 5 1l3 7-3 4q4 8 11 11l4-4 7 4q2 1 0 5-4 5-9 4-17-3-22-21-1-7 4-11z" fill="#f2f2f2" />
  </>],
  ["Calendrier", <Tile id="cal" from="#fafafa" to="#efede9">
    <path d="M5 21V18Q5 5 18 5h28q13 0 13 13v3z" fill="#e8564d" />
    <text x="32" y="18" textAnchor="middle" fontSize="11" fontWeight="700" fontFamily="Inter" fill="#fff">AVR.</text>
    <text x="32" y="50" textAnchor="middle" fontSize="31" fontFamily="Inter" fontWeight="300" fill="#222">5</text>
  </Tile>],
  ["App Store", <Tile id="as" from="#3fa4f2" to="#2264e2">
    <g stroke="#fff" strokeWidth="5" strokeLinecap="round"><path d="M35 17L19 47M29 17l16 30M13 38h20M42 38h9" /></g>
  </Tile>],
  ["TextEdit", <Tile id="te" from="#fff" to="#f3f3f3">
    <path d="M6 19h52M6 26h52M6 33h52M6 40h52M6 47h52" stroke="#bcbcbc" strokeWidth="1.500" /><path d="M14 6v52" stroke="#e8a9a0" />
    <path d="M30 56L54 2" stroke="#6d7f92" strokeWidth="6" strokeLinecap="round" /><path d="M31 53L53 4" stroke="#b9c6d3" strokeWidth="2" /><path d="M27 62l3-6" stroke="#333" strokeWidth="3" />
  </Tile>],
  ["Terminal", <Tile id="tm" from="#e6f2f7" to="#8c8784">
    <rect x="7" y="7" width="50" height="50" rx="11" fill="#000" /><rect x="9" y="9" width="46" height="46" rx="9" fill="#252525" />
    <path d="M15 16l5 4-5 4M23 26h8" fill="none" stroke="#fff" strokeWidth="2.400" />
  </Tile>],
  ["Moniteur d'activité", <Tile id="mo" from="#cfd8dc" to="#8c8784">
    <rect x="7" y="7" width="50" height="50" rx="11" fill="#000" /><rect x="9" y="9" width="46" height="46" rx="9" fill="#121c1c" />
    <path d="M18 9v46M28 9v46M38 9v46M48 9v46M9 18h46M9 28h46M9 38h46M9 48h46" stroke="#1f3a36" />
    <path d="M9 33h7l3-16 3 28 4-14 4 3 5-6 4 6h14" fill="none" stroke="#6fd0b8" strokeWidth="1.800" />
  </Tile>],
  ["Time Machine", <>
    <rect x="26" y="1" width="12" height="9" rx="2" fill="#d0d3d6" />
    <circle cx="32" cy="35" r="27" fill="#4b5b69" stroke="#b6bcc2" strokeWidth="2.500" />
    <path d="M15 38a17 17 0 1117 15M11 34l4 6 5-6M32 35l-7-10M32 35l9-11" fill="none" stroke="#fff" strokeWidth="2.200" />
  </>],
  ["NOT", <>
    <circle cx="32" cy="32" r="31.500" fill="#26733f" /><path d="M2 38A31.500 31.500 0 0150 6z" fill="#3f9c60" />
    <text x="32" y="40" textAnchor="middle" fontSize="24" fontWeight="700" fontFamily="Open Sans" fill="#d6ead9">NOT</text>
  </>],
];

const DOCK_RECENT = [
  ["Aperçu", <Tile id="ap" from="#fff" to="#f0f0f0">
    <path d="M9 10h46v22H9z" fill="#8fb0e8" /><path d="M9 32h46v10H9z" fill="#1f3068" /><path d="M9 42h46v12H9z" fill="#b9a98f" /><path d="M9 44q10-4 20 4v6H9z" fill="#e4e2dc" />
    <path d="M34 38h22l4 24H30z" fill="#d9dcdf" /><rect x="33" y="30" width="22" height="11" rx="3" fill="#111" />
  </Tile>],
  ["Steam", <>
    <defs><Grad id="st" from="#0c1c3c" to="#2f93cf" /></defs>
    <circle cx="31" cy="32" r="30" fill="url(#st)" />
    <path d="M1 29l22 9 15-16 6 8-16 12q-2 10-10 8L2 40z" fill="#ececec" /><circle cx="41" cy="23" r="10" fill="none" stroke="#e0e0e0" strokeWidth="5" /><circle cx="41" cy="23" r="5" fill="#c9ccd2" /><circle cx="22" cy="44" r="7" fill="none" stroke="#eee" strokeWidth="3" />
  </>],
  ["Numbers", <Tile id="nu" from="#fff" to="#fff">
    <path d="M14 6v52M24 6v52M34 6v52M44 6v52M54 6v52M6 16h52M6 26h52M6 36h52M6 46h52" stroke="#d5efd0" />
    <path d="M14 34h9v18h-9z" fill="#dc3a3e" /><path d="M24 24h9v28h-9z" fill="#f08a2a" /><path d="M34 12h8v40h-8z" fill="#57c241" /><path d="M43 18h8v34h-8z" fill="#2b7de8" />
  </Tile>],
];

const DOCK_END = [
  ["Téléchargements", <>
    <path d="M14 1h29v20H14z" fill="#d8d8d8" /><path d="M9 7h30l13 14v41H9z" fill="#f1f1f1" /><path d="M36 3h12v18H36z" fill="#fff" />
    <path d="M22 14v6M26 14v6M21 28h24M21 32h24M21 36h24M21 40h24M27 45h18" stroke="#9c9c9c" strokeWidth="2" />
    <text x="20" y="58" fontSize="10" fontFamily="Liberation Sans" fill="#555">DOC</text>
  </>],
  ["Documents", <>
    <path d="M15 3h34v12H15z" fill="#e8c75a" /><circle cx="32" cy="35" r="28" fill="#e4364a" stroke="#f4f4f4" strokeWidth="2.500" />
    <path d="M24 17h16l10 10v16L40 53H24L14 43V27z" fill="none" stroke="#fff" strokeWidth="2" />
    <text x="32" y="41" textAnchor="middle" fontSize="16" fontWeight="700" fontFamily="Open Sans" fill="#fff">ABP</text>
  </>],
  ["Corbeille", <>
    <defs><Grad id="tr" from="#50585f" to="#7e868c" /></defs>
    <path d="M9 8h46l-5 46q-1 6-18 6t-18-6z" fill="url(#tr)" fillOpacity=".85" /><ellipse cx="32" cy="8" rx="23" ry="5" fill="#3a4249" stroke="#878e94" strokeWidth="1.500" />
  </>],
];

function DockItem({ name, art, running }) {
  return (
    <li className="flex min-w-0 flex-1 flex-col items-center">
      <button aria-label={name}><svg viewBox="0 0 64 64" width="64" height="64" className="block">{art}</svg></button>
      {running && <span className="mt-0.5 size-2 rounded-full bg-[#9aa1ab]" />}
    </li>
  );
}

function Dock() {
  return (
    <footer className="h-[100px] shrink-0 bg-[#050d18] px-[53px] pt-[2px] pb-[10px]">
      <ul className="flex h-full rounded-3xl border-2 border-[#434a54] bg-[#1a212e] px-[2px] pt-[7px]">
        {DOCK_MAIN.map(([n, a], i) => <DockItem key={n} name={n} art={a} running={i < 3} />)}
        <li aria-hidden="true" className="mx-[14px] h-16 w-[2px] bg-[#434a54]" />
        {DOCK_RECENT.map(([n, a]) => <DockItem key={n} name={n} art={a} />)}
        <li aria-hidden="true" className="mx-[14px] h-16 w-[2px] bg-[#434a54]" />
        {DOCK_END.map(([n, a]) => <DockItem key={n} name={n} art={a} />)}
      </ul>
    </footer>
  );
}

export default function App() {
  return (
    <div className={`flex h-screen flex-col overflow-hidden bg-linear-to-b from-[#5d6c88] to-[#050d18] ${SANS}`}>
      <MenuBar />
      <section className="relative flex min-h-0 flex-1 flex-col overflow-hidden rounded-[22px] bg-white">
        <TabBar />
        <Toolbar />
        <BookmarkBar />
        <SiteHeader />
        <div className="flex min-h-0 flex-1 overflow-hidden">
          <Drawer />
          <Main />
        </div>
        <div className="pointer-events-none absolute right-0 bottom-0 left-0 h-20 bg-linear-to-t from-black/12 to-transparent [mask-image:linear-gradient(to_right,transparent,black_5%,black_95%,transparent)]" />
      </section>
      <Dock />
    </div>
  );
}
